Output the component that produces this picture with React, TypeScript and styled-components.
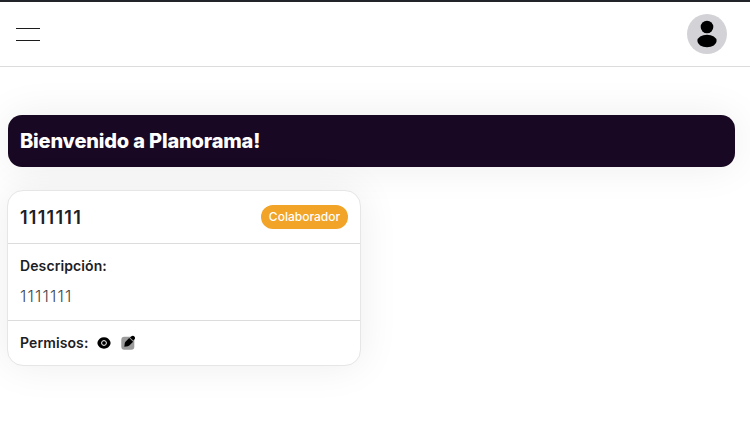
import React from "react";
import styled, { createGlobalStyle } from "styled-components";

const GlobalStyle = createGlobalStyle`
  * { box-sizing: border-box; }
  body {
    margin: 0;
    background: #fff;
    color: #1c2024;
    font-family: Inter, sans-serif;
    overflow: hidden;
    -webkit-font-smoothing: antialiased;
  }
`;

const Page = styled.div`
  height: 442px;
  overflow: hidden;
  border-top: 2px solid #212529;
`;

const TopBar = styled.header`
  display: flex;
  align-items: center;
  justify-content: space-between;
  height: 65px;
  padding: 0 23px 0 16px;
  border-bottom: 1px solid #dcdcdc;
`;

const MenuButton = styled.button`
  width: 24px;
  height: 13px;
  padding: 0;
  border: solid #1c1c1c;
  border-width: 1px 0;
  background: none;
`;

const Avatar = styled.div`
  display: flex;
  width: 40px;
  height: 40px;
  border-radius: 50%;
  background: #d3d2d7;
`;

const Main = styled.main`
  padding: 48px 15px 0 7px;
`;

const Banner = styled.h1`
  display: flex;
  align-items: center;
  height: 52px;
  margin: 0 0 23px 1px;
  padding: 0 12px;
  border-radius: 14px;
  background: #190823;
  color: #fff;
  font-size: 20px;
  line-height: 24px;
  font-weight: 800;
  letter-spacing: -0.17px;
  box-shadow: 0 0 40px rgba(0, 0, 0, 0.075);
`;

const Card = styled.article`
  width: 354px;
  border: 1px solid #e6e6e6;
  border-radius: 16px;
  background: #fff;
  background-clip: padding-box;
  box-shadow: 0 0 40px rgba(0, 0, 0, 0.075);
`;

const CardHeader = styled.div`
  display: flex;
  align-items: center;
  justify-content: space-between;
  height: 53px;
  padding: 0 12px;
  border-bottom: 1px solid #dcdcdc;
`;

const CardTitle = styled.h2`
  margin: 0;
  padding-top: 1px;
  font-size: 18px;
  font-weight: 600;
  line-height: 24px;
  letter-spacing: 1.25px;
`;

const Badge = styled.span`
  display: flex;
  align-items: center;
  justify-content: center;
  width: 87px;
  height: 24px;
  padding-bottom: 1px;
  border-radius: 12px;
  background: #f1a428;
  color: #fff;
  font-size: 12px;
  font-weight: 500;
`;

const CardBody = styled.div`
  height: 77px;
  padding: 12px 12px 0;
  border-bottom: 1px solid #dcdcdc;
`;

const Label = styled.div`
  font-size: 14px;
  font-weight: 600;
  line-height: 20px;
  letter-spacing: 0.1px;
`;

const Description = styled.p`
  margin: 8px 0 0;
  color: #3f4347;
  font-size: 16px;
  font-weight: 300;
  line-height: 24px;
  letter-spacing: 1.2px;
`;

const CardFooter = styled.div`
  display: flex;
  align-items: center;
  gap: 8px;
  height: 44px;
  padding: 0 12px;
`;

const PersonIcon = () => (
  <svg width="40" height="40" viewBox="0 0 40 40" aria-hidden="true">
    <circle cx="20" cy="13" r="6.3" />
    <ellipse cx="20" cy="27" rx="9.6" ry="6.2" />
  </svg>
);

const EyeIcon = () => (
  <svg width="16" height="16" viewBox="0 0 16 16" aria-hidden="true">
    <path d="M8 2.3c3.2 0 5.5 2.1 6.3 4.2.4 1 .4 2 0 3-.8 2.1-3.1 4.2-6.3 4.2S2.500 11.600 1.700 9.500c-.4-1-.4-2 0-3C2.500 4.400 4.800 2.300 8 2.300Z" />
    <circle cx="8" cy="8" r="2.4" stroke="#fff" strokeWidth="1" />
  </svg>
);

const EditIcon = () => (
  <svg width="16" height="16" viewBox="0 0 16 16" aria-hidden="true">
    <rect x="1.300" y="1.800" width="13" height="13" rx="3" fill="#9b9b9b" />
    <path d="M4.300 11.800 4.800 8c.1-.7.4-1.100.9-1.600L9.200 2.900l3.900 3.900-3.500 3.500c-.5.500-1 .8-1.700.9Z" />
    <path d="m10 2.500 1.100-1c1.100-1 2.500-.9 3.300-.1s.9 2.200-.1 3.200l-1 1Z" />
  </svg>
);

const Permissions = styled.div`
  display: flex;
  gap: 8px;
  svg { display: block; }
`;

export default function App() {
  return (
    <Page>
      <GlobalStyle />
      <TopBar>
        <MenuButton aria-label="Menú" />
        <Avatar><PersonIcon /></Avatar>
      </TopBar>
      <Main>
        <Banner>Bienvenido a Planorama!</Banner>
        <Card>
          <CardHeader>
            <CardTitle>1111111</CardTitle>
            <Badge>Colaborador</Badge>
          </CardHeader>
          <CardBody>
            <Label>Descripción:</Label>
            <Description>1111111</Description>
          </CardBody>
          <CardFooter>
            <Label>Permisos:</Label>
            <Permissions>
              <EyeIcon />
              <EditIcon />
            </Permissions>
          </CardFooter>
        </Card>
      </Main>
    </Page>
  );
}
